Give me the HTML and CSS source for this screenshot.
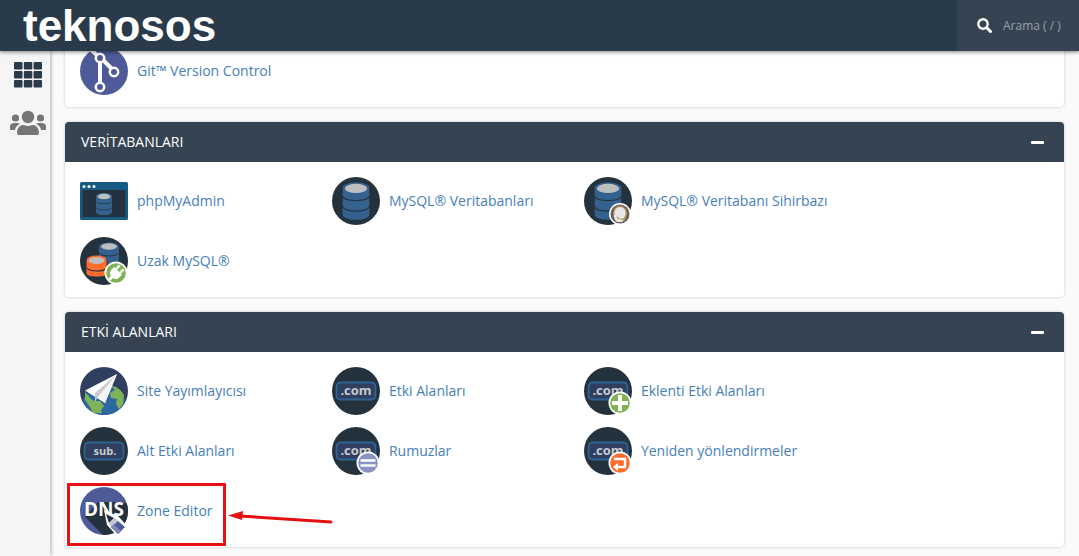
FILE: index.html
```
<!DOCTYPE html>
<html lang="tr">
<head>
    <meta charset="UTF-8">
    <meta name="viewport" content="width=device-width, initial-scale=1.0">
    <title>teknosos</title>
    <link rel="stylesheet" href="styles.css">
</head>
<body>
    <!-- shared icon parts -->
    <svg class="defs" width="0" height="0" aria-hidden="true">
        <defs>
            <clipPath id="round"><circle cx="24" cy="24" r="24"/></clipPath>
            <symbol id="db" viewBox="0 0 28 40">
                <path d="M0 7v27c0 3 6 5.500 14 5.500S28 37 28 34V7z" fill="#34618e"/>
                <ellipse cx="14" cy="6.500" rx="14" ry="6" fill="#34618e"/>
                <ellipse cx="14" cy="7" rx="11.500" ry="4.800" fill="#bcbec0"/>
                <path d="M0 15c2 4 8 4.500 14 4.500S26 19 28 15M0 26c2 4 8 4.500 14 4.500S26 30 28 26" fill="none" stroke="#24323d" stroke-width="1.200"/>
            </symbol>
            <symbol id="dotcom" viewBox="0 0 48 48">
                <circle cx="24" cy="24" r="24" fill="#24323d"/>
                <rect x="4.500" y="15.500" width="39" height="17" rx="4" fill="#303f5f" stroke="#2c6494" stroke-width="1.800"/>
                <text x="24" y="28" text-anchor="middle" class="icon-text">.com</text>
            </symbol>
        </defs>
    </svg>

    <header class="topbar">
        <a href="#" class="logo">teknosos</a>
        <div class="search">
            <svg width="15" height="15" viewBox="0 0 15 15" aria-hidden="true">
                <circle cx="6" cy="6" r="4.700" fill="none" stroke="#fff" stroke-width="2.400"/>
                <path d="M9.500 9.500l4 4" stroke="#fff" stroke-width="3" stroke-linecap="round"/>
            </svg>
            <input type="text" placeholder="Arama ( / )" aria-label="Arama">
        </div>
    </header>

    <div class="page">
        <nav class="sidebar">
            <a href="#" aria-label="Araçlar">
                <svg width="28" height="26" viewBox="0 0 28 26" fill="#293a4a">
                    <rect width="8.500" height="7.500" rx="1"/><rect x="9.800" width="8.500" height="7.500" rx="1"/><rect x="19.500" width="8.500" height="7.500" rx="1"/>
                    <rect y="9" width="8.500" height="7.500" rx="1"/><rect x="9.800" y="9" width="8.500" height="7.500" rx="1"/><rect x="19.500" y="9" width="8.500" height="7.500" rx="1"/>
                    <rect y="18" width="8.500" height="7.500" rx="1"/><rect x="9.800" y="18" width="8.500" height="7.500" rx="1"/><rect x="19.500" y="18" width="8.500" height="7.500" rx="1"/>
                </svg>
            </a>
            <a href="#" aria-label="Kullanıcı Yöneticisi">
                <svg width="36" height="26" viewBox="0 0 36 26" fill="#757575">
                    <circle cx="18" cy="7" r="6.200"/>
                    <circle cx="5.500" cy="8" r="3.600"/>
                    <circle cx="30.500" cy="8" r="3.600"/>
                    <path d="M9 25q-2 0-2-2c0-5 3-8 6-8 2 0 3 1 5 1s3-1 5-1c3 0 6 3 6 8q0 2-2 2z"/>
                    <path d="M0 17c0-3 2-4 4-4h3q2 0 3 1c-3 1-5 4-5 6H1q-1 0-1-1zM36 17c0-3-2-4-4-4h-3q-2 0-3 1c3 1 5 4 5 6h4q1 0 1-1z"/>
                </svg>
            </a>
        </nav>

        <main class="content">
            <section class="panel panel-scrolled">
                <div class="items">
                    <a href="#" class="item">
                        <svg class="icon" viewBox="0 0 48 48">
                            <circle cx="24" cy="24" r="24" fill="#4f5b99"/>
                            <g fill="none" stroke="#fff">
                                <path d="M11 3l6 5M20 15v21M22 12l10 10" stroke-width="4"/>
                                <circle cx="20" cy="11" r="4.200" stroke-width="2.500" fill="#4f5b99"/>
                                <circle cx="34" cy="25" r="4.200" stroke-width="2.500" fill="#4f5b99"/>
                                <circle cx="20" cy="40" r="4.200" stroke-width="2.500" fill="#4f5b99"/>
                            </g>
                        </svg>
                        <span>Git™ Version Control</span>
                    </a>
                </div>
            </section>

            <section class="panel">
                <div class="panel-head">
                    <h2>VERİTABANLARI</h2>
                    <button type="button" class="collapse" aria-label="Daralt"></button>
                </div>
                <div class="items">
                    <a href="#" class="item">
                        <svg class="icon" viewBox="0 0 48 48">
                            <rect y="5" width="48" height="38" rx="1.500" fill="#145a82"/>
                            <rect x="2.500" y="13" width="43" height="27" rx="1" fill="#24323d"/>
                            <g fill="#fff"><circle cx="4" cy="9.500" r="1.500"/><circle cx="9" cy="9.500" r="1.500"/><circle cx="14" cy="9.500" r="1.500"/></g>
                            <use href="#db" x="16" y="15.500" width="16" height="23"/>
                        </svg>
                        <span>phpMyAdmin</span>
                    </a>
                    <a href="#" class="item">
                        <svg class="icon" viewBox="0 0 48 48">
                            <circle cx="24" cy="24" r="24" fill="#24323d"/>
                            <use href="#db" x="10.500" y="4.500" width="27" height="39"/>
                        </svg>
                        <span>MySQL® Veritabanları</span>
                    </a>
                    <a href="#" class="item">
                        <svg class="icon" viewBox="0 0 48 48">
                            <circle cx="24" cy="24" r="24" fill="#24323d"/>
                            <use href="#db" x="10.500" y="4.500" width="27" height="39"/>
                            <circle cx="36" cy="37" r="11" fill="#fff"/>
                            <circle cx="36" cy="37" r="9.500" fill="#66605f"/>
                            <path d="M31 43c-3-6-1-13 5-13s8 6 5 12l-3 3h-5z" fill="#e6e7e8"/>
                            <path d="M30 38c-1-5 2-9 6-9s7 4 6 9c-1 4-3 5-6 4M35 42l-2-2" fill="none" stroke="#bd944a" stroke-width="1.200"/>
                        </svg>
                        <span>MySQL® Veritabanı Sihirbazı</span>
                    </a>
                    <a href="#" class="item">
                        <svg class="icon" viewBox="0 0 48 48">
                            <circle cx="24" cy="24" r="24" fill="#24323d"/>
                            <path d="M19 9v14c0 3 5 4 10 4s10-1 10-4V9z" fill="#34618e"/>
                            <ellipse cx="29" cy="9.500" rx="10" ry="4" fill="#34618e"/>
                            <ellipse cx="29" cy="9.500" rx="8" ry="3.200" fill="#bcbec0"/>
                            <path d="M19 16c3 4 17 4 20 0" fill="none" stroke="#24323d"/>
                            <path d="M6 23v13c0 3 5 4 11 4s10-1 10-4V23z" fill="#ff6c2c" stroke="#24323d"/>
                            <ellipse cx="16.500" cy="23" rx="10" ry="4.500" fill="#ff6c2c"/>
                            <ellipse cx="16.500" cy="23.500" rx="8" ry="3.500" fill="#bcbec0"/>
                            <path d="M7 31c3 4 16 4 20 0" fill="none" stroke="#24323d" stroke-width="1.200"/>
                            <circle cx="36" cy="36" r="11.500" fill="#fff"/>
                            <circle cx="36" cy="36" r="9.800" fill="#7fb356"/>
                            <g transform="rotate(45 36 36)" fill="#fff">
                                <path d="M30.500 33h11v4c0 3-2 4.500-4 4.500v4h-3v-4c-2 0-4-1.500-4-4.500z"/>
                                <rect x="32" y="28" width="2.500" height="5"/><rect x="37.500" y="28" width="2.500" height="5"/>
                            </g>
                        </svg>
                        <span>Uzak MySQL®</span>
                    </a>
                </div>
            </section>

            <section class="panel">
                <div class="panel-head">
                    <h2>ETKİ ALANLARI</h2>
                    <button type="button" class="collapse" aria-label="Daralt"></button>
                </div>
                <div class="items">
                    <a href="#" class="item">
                        <svg class="icon" viewBox="0 0 48 48">
                            <g clip-path="url(#round)">
                                <rect width="48" height="48" fill="#303f5f"/>
                                <circle cx="24" cy="40" r="22" fill="#2d68a0"/>
                                <path d="M5 25l7 8 3 1h5l4 5-3 4 1 3H13l-3-6-5-7z" fill="#7fb356"/>
                                <path d="M31 19c6 0 10 4 13 9l-1 9-4 5-3-5 1-5-6-1-1-5 5-3z" fill="#7fb356"/>
                            </g>
                            <path d="M5 23.500L37 7 25 36z" fill="#fff"/>
                            <path d="M37 7L15 26v9l3-5z" fill="#c9cbcd"/>
                            <path d="M37 7L18 30l7 6z" fill="#f4f5f5"/>
                        </svg>
                        <span>Site Yayımlayıcısı</span>
                    </a>
                    <a href="#" class="item">
                        <svg class="icon" viewBox="0 0 48 48"><use href="#dotcom"/></svg>
                        <span>Etki Alanları</span>
                    </a>
                    <a href="#" class="item">
                        <svg class="icon" viewBox="0 0 48 48">
                            <use href="#dotcom"/>
                            <circle cx="36" cy="36" r="11.500" fill="#fff"/>
                            <circle cx="36" cy="36" r="9.800" fill="#7fb356"/>
                            <path d="M36 28v16M28 36h16" stroke="#fff" stroke-width="4"/>
                        </svg>
                        <span>Eklenti Etki Alanları</span>
                    </a>
                    <a href="#" class="item">
                        <svg class="icon" viewBox="0 0 48 48">
                            <circle cx="24" cy="24" r="24" fill="#24323d"/>
                            <rect x="4.500" y="15.500" width="39" height="17" rx="4" fill="#303f5f" stroke="#2c6494" stroke-width="1.800"/>
                            <text x="25" y="28" text-anchor="middle" class="icon-text icon-text-small">sub.</text>
                        </svg>
                        <span>Alt Etki Alanları</span>
                    </a>
                    <a href="#" class="item">
                        <svg class="icon" viewBox="0 0 48 48">
                            <use href="#dotcom"/>
                            <circle cx="36" cy="36" r="11.500" fill="#fff"/>
                            <circle cx="36" cy="36" r="9.800" fill="#8b93c4"/>
                            <path d="M28.500 33.500h15M28.500 38.500h15" stroke="#fff" stroke-width="2.500"/>
                        </svg>
                        <span>Rumuzlar</span>
                    </a>
                    <a href="#" class="item">
                        <svg class="icon" viewBox="0 0 48 48">
                            <use href="#dotcom"/>
                            <circle cx="36" cy="36" r="11.500" fill="#fff"/>
                            <circle cx="36" cy="36" r="9.800" fill="#ff6c2c"/>
                            <path d="M30 32h11v8H32" fill="none" stroke="#fff" stroke-width="2.400"/>
                            <path d="M34 36v8l-5-4z" fill="#fff"/>
                        </svg>
                        <span>Yeniden yönlendirmeler</span>
                    </a>
                    <a href="#" class="item item-marked">
                        <svg class="icon" viewBox="0 0 48 48">
                            <g clip-path="url(#round)">
                                <rect width="48" height="48" fill="#4f5b99"/>
                                <path d="M5 30l18 18h25V17l-5-2H18z" fill="#24323d"/>
                            </g>
                            <text x="24" y="29" text-anchor="middle" class="icon-text icon-text-dns">DNS</text>
                            <path d="M24 23l3 15 10 11 11-9-10-11z" fill="#fff"/>
                            <path d="M26 27l3 9 5-5z" fill="#24323d"/>
                            <path d="M29 36l6-5 3 3-7 6z" fill="#c4c6d4"/>
                            <path d="M31 40l7-6 7 6-7 7z" fill="#4f5b99"/>
                            <path d="M31 40l3-2.500 7 7-3 2.500z" fill="#7f88bd"/>
                        </svg>
                        <span>Zone Editor</span>
                        <svg class="arrow" width="106" height="14" viewBox="0 0 106 14" aria-hidden="true">
                            <path d="M12 5l91 6" stroke="#e60f12" stroke-width="3" stroke-linecap="round"/>
                            <path d="M0 4.500L15 0l-1 9z" fill="#e60f12"/>
                        </svg>
                    </a>
                </div>
            </section>
        </main>
    </div>
</body>
</html>
```

FILE: styles.css
```
*,
*::before {
    box-sizing: border-box;
}
body {
    margin: 0;
    min-height: 100vh;
    display: flex;
    flex-direction: column;
    font-family: "Open Sans", "Noto Sans", sans-serif;
    font-size: 14px;
    background-color: #fafafa;
}
a {
    color: #4780b9;
    text-decoration: none;
}
.defs {
    position: absolute;
}

/* top bar */
.topbar {
    position: relative;
    z-index: 2;
    display: flex;
    justify-content: space-between;
    height: 51px;
    background-color: #293a4a;
    box-shadow: 0 1px 4px rgba(0, 0, 0, 0.5);
}
.logo {
    padding-left: 23px;
    color: #fff;
    font-family: "Liberation Sans", Arial, sans-serif;
    font-size: 44px;
    font-weight: bold;
    line-height: 51px;
}
.search {
    display: flex;
    align-items: center;
    gap: 11px;
    width: 122px;
    padding-left: 20px;
    background-color: #354352;
}
.search svg {
    flex: none;
}
.search input {
    width: 70px;
    padding: 0;
    border: 0;
    background: none;
    color: #fff;
    font-family: inherit;
    font-size: 12px;
}
.search input::placeholder {
    color: #99a0a6;
}

.page {
    flex: 1;
    display: flex;
}

/* sidebar */
.sidebar {
    flex: none;
    display: flex;
    flex-direction: column;
    align-items: center;
    gap: 22px;
    width: 50px;
    padding: 11px 0 0 6px;
    background-color: #f5f5f5;
    box-shadow: 1px 0 4px rgba(0, 0, 0, 0.3);
}
.sidebar a {
    display: flex;
}

/* panels */
.content {
    flex: 1;
    display: flex;
    flex-direction: column;
    gap: 15px;
    padding: 0 15px 9px;
}
.panel {
    border-radius: 4px;
    background-color: #fff;
    box-shadow: 0 0 3px rgba(0, 0, 0, 0.2);
}
/* top of this one is scrolled under the bar */
.panel-scrolled {
    margin-top: -19px;
}
.panel-head {
    display: flex;
    align-items: center;
    justify-content: space-between;
    height: 40px;
    padding: 0 20px 0 16px;
    border-radius: 4px 4px 0 0;
    background-color: #354352;
}
.panel-head h2 {
    margin: 0;
    padding-bottom: 2px;
    color: #fff;
    font-size: 14px;
    font-weight: normal;
}
.collapse {
    width: 13px;
    height: 3px;
    padding: 0;
    border: 0;
    border-radius: 1px;
    background-color: #fff;
    cursor: pointer;
}
.items {
    display: grid;
    grid-template-columns: repeat(3, 26%);
    row-gap: 12px;
    padding: 15px 15px 12px;
}
.item {
    position: relative;
    display: flex;
    align-items: center;
    gap: 9px;
}
.item span {
    padding-bottom: 2px;
}
.item:hover span {
    text-decoration: underline;
}
.icon {
    flex: none;
    width: 48px;
    height: 48px;
}
.icon-text {
    fill: #c8cace;
    font-family: "Open Sans", sans-serif;
    font-size: 13px;
    font-weight: bold;
}
.icon-text-small {
    font-size: 11px;
}
.icon-text-dns {
    fill: #fff;
    font-size: 19px;
}

/* highlight around an item */
.item-marked::before {
    content: "";
    position: absolute;
    top: -4px;
    left: -13px;
    width: 159px;
    height: 63px;
    border: 3px solid #e60f12;
    border-radius: 1px;
}
.arrow {
    position: absolute;
    top: 24px;
    left: 148px;
}
```
